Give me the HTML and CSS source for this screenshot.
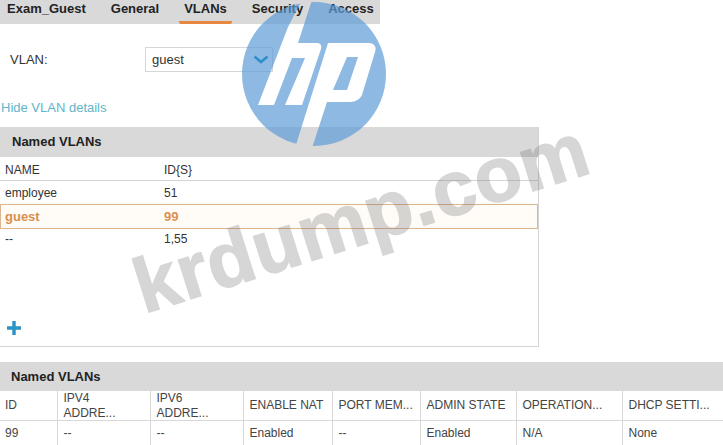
FILE: index.html
```html
<!DOCTYPE html>
<html lang="en">
<head>
    <meta charset="UTF-8">
    <title>Named VLANs</title>
    <link rel="stylesheet" href="styles.css">
</head>
<body>
    <nav class="tabs">
        <span class="tab">Exam_Guest</span>
        <span class="tab">General</span>
        <span class="tab active">VLANs</span>
        <span class="tab">Security</span>
        <span class="tab">Access</span>
    </nav>

    <div class="vlan-row">
        <label class="vlan-label">VLAN:</label>
        <div class="select-box">
            <span>guest</span>
            <svg class="chevron" width="16" height="9" viewBox="0 0 16 9"><path d="M1.5 1.5 L8 7 L14.5 1.5" fill="none" stroke="#2f8fcb" stroke-width="2.6"/></svg>
        </div>
    </div>

    <a class="details-link" href="#">Hide VLAN details</a>

    <section class="panel">
        <h2 class="panel-title">Named VLANs</h2>
        <div class="vlan-table">
            <div class="vlan-line vlan-head"><span>NAME</span><span>ID{S}</span></div>
            <div class="vlan-line"><span>employee</span><span>51</span></div>
            <div class="vlan-line selected"><span>guest</span><span>99</span></div>
            <div class="vlan-line last"><span>--</span><span>1,55</span></div>
        </div>
        <div class="add-icon">
            <svg width="16" height="16" viewBox="0 0 16 16"><path d="M8 1 V15 M1 8 H15" stroke="#2a94c4" stroke-width="3.4"/></svg>
        </div>
    </section>

    <section class="details">
        <h2 class="panel-title details-title">Named VLANs</h2>
        <table class="details-table">
            <colgroup>
                <col class="c1"><col class="c2"><col class="c3"><col class="c4">
                <col class="c5"><col class="c6"><col class="c7"><col class="c8">
            </colgroup>
            <tr>
                <th>ID</th>
                <th>IPV4<br>ADDRE...</th>
                <th>IPV6<br>ADDRE...</th>
                <th>ENABLE NAT</th>
                <th>PORT MEM...</th>
                <th>ADMIN STATE</th>
                <th>OPERATION...</th>
                <th>DHCP SETTI...</th>
            </tr>
            <tr>
                <td>99</td>
                <td>--</td>
                <td>--</td>
                <td>Enabled</td>
                <td>--</td>
                <td>Enabled</td>
                <td>N/A</td>
                <td>None</td>
            </tr>
        </table>
    </section>

    <!-- watermark and logo sit over the page -->
    <div class="watermark">krdump.com</div>
    <svg class="hp-logo" width="144" height="146" viewBox="0 0 144 146">
        <defs>
            <mask id="hp-cut">
                <circle cx="72" cy="72" r="72" fill="#fff"/>
                <path fill="#000" d="M60 -2 L46 25 L16 103 L32 103 L50 56 L63 56 L43 103 L60 103 L79 47 C80 43 78 41 75 41 L56 41 L70 -2 Z"/>
                <path fill="#000" fill-rule="evenodd" d="M86 41 L53 146 L70 146 L85 100 L108 100 C114 100 118 97 120 93 L133 50 C135 45 132 41 127 41 Z M105 55 L116 55 L105 88 L91 88 Z"/>
            </mask>
        </defs>
        <rect width="144" height="146" fill="#5c9bd5" fill-opacity="0.7" mask="url(#hp-cut)"/>
    </svg>
</body>
</html>
```

FILE: styles.css
```css
body {
    font-family: 'Liberation Sans', Arial, sans-serif;
    font-size: 12px;
    color: #333;
    background-color: #fff;
    margin: 0;
    width: 723px;
    height: 445px;
    overflow: hidden;
    position: relative;
}

.tabs {
    display: flex;
    gap: 25px;
    width: 373px;
    height: 24px;
    padding-left: 7px;
    background-color: #d9d9d9;
}

.tab {
    font-size: 13px;
    font-weight: bold;
    color: #222;
    line-height: 17px;
    height: 24px;
}

.tab.active {
    padding: 0 5px;
    margin: 0 -5px;
    box-sizing: border-box;
    border-bottom: 3px solid #e8873f;
    border-radius: 2px;
}

.vlan-row {
    display: flex;
    align-items: center;
    padding: 23px 0 0 10px;
}

.vlan-label {
    width: 135px;
    font-size: 13px;
}

.select-box {
    display: flex;
    justify-content: space-between;
    align-items: center;
    box-sizing: border-box;
    width: 128px;
    height: 25px;
    padding: 0 3px 0 6px;
    border: 1px solid #d6d6d6;
    font-size: 13px;
}

.chevron {
    position: relative;
    z-index: 2;
}

.details-link {
    display: block;
    margin: 28px 0 0 1px;
    height: 27px;
    line-height: 16px;
    font-size: 13px;
    color: #62b5c9;
    text-decoration: none;
}

.panel {
    width: 539px;
    height: 220px;
    box-sizing: border-box;
    border-right: 1px solid #d4d4d4;
    border-bottom: 1px solid #d4d4d4;
}

.panel-title {
    margin: 0;
    height: 30px;
    padding-left: 12px;
    font-size: 13px;
    line-height: 30px;
    color: #222;
    background-color: #d9d9d9;
}

.vlan-line {
    display: flex;
    height: 23px;
    line-height: 25px;
    padding-left: 5px;
}

.vlan-line span:first-child {
    width: 159px;
}

.vlan-head {
    line-height: 26px;
    border-bottom: 1px solid #d4d4d4;
}

.vlan-line.selected {
    height: 25px;
    line-height: 24px;
    box-sizing: border-box;
    font-size: 13px;
    font-weight: bold;
    color: #d98f4e;
    background-color: #fffcf8;
    border: 1px solid #dcb48e;
    padding-left: 4px;
}

.vlan-line.last {
    line-height: 20px;
}

.add-icon {
    margin: 68px 0 0 6px;
    height: 16px;
}

.details {
    margin-top: 15px;
}

.details-title {
    height: 29px;
    padding-left: 11px;
}

.details-table {
    width: 723px;
    table-layout: fixed;
    border-collapse: collapse;
}

.details-table th,
.details-table td {
    padding: 0 0 0 6px;
    font-weight: normal;
    text-align: left;
    vertical-align: middle;
    line-height: 14.5px;
    color: #444;
    border-left: 1px solid #d8d8d8;
    border-bottom: 1px solid #d8d8d8;
    white-space: nowrap;
}

.details-table th:first-child,
.details-table td:first-child {
    padding-left: 5px;
    border-left: none;
}

.details-table th {
    height: 29px;
}

.details-table td {
    height: 25px;
}

.c1 { width: 57px; }
.c2 { width: 93px; }
.c3 { width: 93px; }
.c4 { width: 89px; }
.c5 { width: 88px; }
.c6 { width: 96px; }
.c7 { width: 106px; }
.c8 { width: 101px; }

.watermark {
    position: absolute;
    left: 125px;
    top: 172px;
    font-size: 77px;
    font-weight: bold;
    line-height: 90px;
    letter-spacing: 1px;
    white-space: nowrap;
    color: #6e6e6e;
    -webkit-text-stroke: 1.5px #6e6e6e;
    opacity: 0.28;
    transform: rotate(-17.5deg);
}

.hp-logo {
    position: absolute;
    left: 242px;
    top: 2px;
}
```
